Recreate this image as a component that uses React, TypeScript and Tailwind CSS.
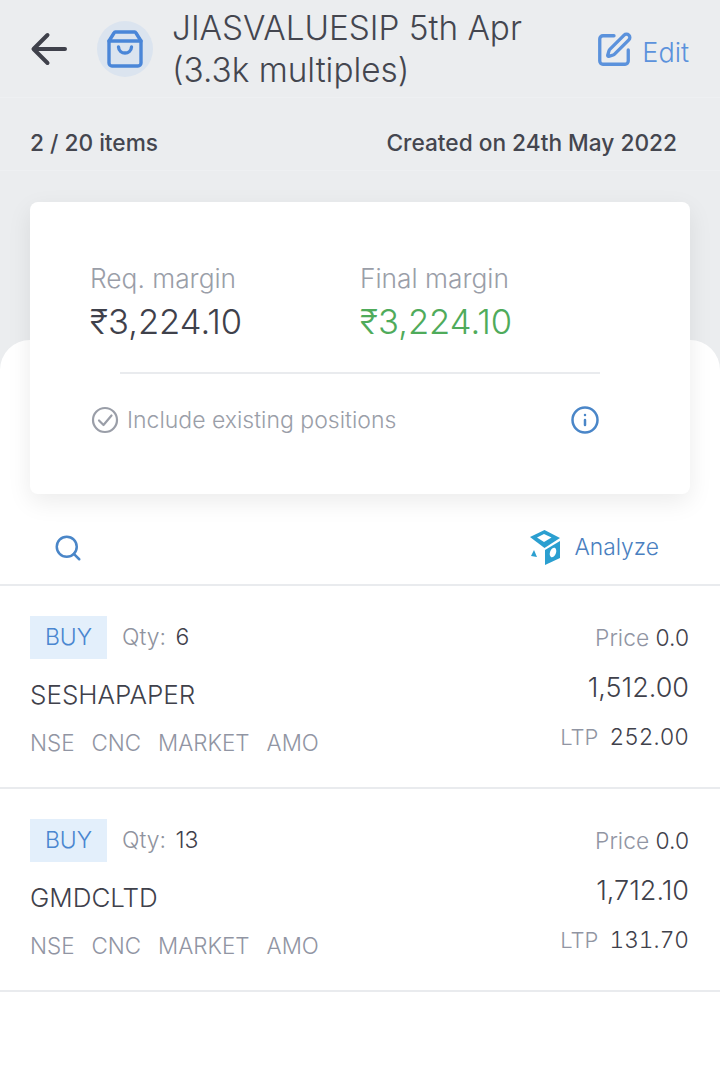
import { Search, Info, SquarePen } from 'lucide-react';

interface Order {
  symbol: string;
  qty: number;
  total: string;
  ltp: string;
}

const orders: Order[] = [
  { symbol: 'SESHAPAPER', qty: 6, total: '1,512.00', ltp: '252.00' },
  { symbol: 'GMDCLTD', qty: 13, total: '1,712.10', ltp: '131.70' },
];

function OrderRow({ order }: { order: Order }) {
  return (
    <div className="flex h-[203px] justify-between border-b-2 border-[#e9ebee] px-[30px] pt-[30px] pr-[31px]">
      <div>
        <div className="flex items-center gap-[15px]">
          <span className="flex h-[43px] w-[77px] items-center justify-center bg-[#e3effb] text-[23px] font-light text-[#4a86d0]">BUY</span>
          <span className="text-[23px] font-light text-[#8f939e]">
            Qty: <span className="ml-[3px] text-[#3f414b]">{order.qty}</span>
          </span>
        </div>
        <div className="mt-[18px] text-[26px] leading-[36px] font-light text-[#3f414b]">{order.symbol}</div>
        <div className="mt-[15px] flex gap-[17px] text-[22.400px] leading-[30px] font-light text-[#9195a3]">
          <span>NSE</span>
          <span>CNC</span>
          <span>MARKET</span>
          <span>AMO</span>
        </div>
      </div>
      <div className="flex flex-col items-end">
        <div className="mt-[7px] text-[22.800px] leading-[30px] font-light text-[#9195a3]">
          Price <span className="text-[#3f414b]">0.0</span>
        </div>
        <div className="mt-[17px] text-[27px] leading-[36px] font-light text-[#3f414b]">{order.total}</div>
        <div className="mt-[16px] text-[22px] leading-[30px] font-light text-[#9195a3]">
          LTP <span className="ml-[5px] text-[22.700px] text-[#3f414b] tabular-nums">{order.ltp}</span>
        </div>
      </div>
    </div>
  );
}

export default function App() {
  return (
    <div className="h-[1077px] w-[720px] overflow-hidden bg-[#ebedef] font-['Inter',sans-serif]">
      {/* header */}
      <div className="flex h-[98px] items-center border-b border-[#eef0f2] pl-[28px] pr-[31px]">
        <svg viewBox="0 0 40 40" className="h-[40px] w-[40px] text-[#3f414b]" fill="none" stroke="currentColor" strokeWidth={4} strokeLinecap="round" strokeLinejoin="round">
          <path d="M6 20H37M19.500 6 5.500 20 19.500 34" />
        </svg>
        <div className="ml-[29px] flex h-[56px] w-[56px] items-center justify-center rounded-full bg-[#dbe4ef]">
          <svg viewBox="0 0 36 38" className="h-[38px] w-[36px] text-[#4a86d8]" fill="none" stroke="currentColor" strokeWidth={3.4} strokeLinecap="round" strokeLinejoin="round">
            <path d="M2 11 7 3A2 2 0 0 1 8.500 2H27.500A2 2 0 0 1 29 3L34 11V33A3 3 0 0 1 31 36H5A3 3 0 0 1 2 33Z" />
            <path d="M2 11H34" />
            <path d="M11.500 17C12 25 24 25 24.500 17" />
          </svg>
        </div>
        <div className="ml-[19px] flex-1 text-[33.300px] leading-[42px] font-light whitespace-nowrap text-[#44464f]">
          JIASVALUESIP 5th Apr
          <br />
          (3.3k multiples)
        </div>
        <div className="mt-[3px] flex items-center gap-[9px] text-[#5b92dc]">
          <SquarePen className="h-[38px] w-[38px]" strokeWidth={2.1} />
          <span className="mt-[7px] text-[27px] font-light">Edit</span>
        </div>
      </div>

      {/* summary line */}
      <div className="flex h-[73px] items-start justify-between border-b border-[#eef0f2] pt-[31px] pr-[43px] pl-[30px] text-[22.700px] leading-[28px] font-medium text-[#44464f]">
        <span>2 / 20 items</span>
        <span>Created on 24th May 2022</span>
      </div>

      {/* margin card, hangs over the sheet */}
      <div className="relative z-10 mx-[30px] mt-[31px] -mb-[154px] h-[292px] rounded-[8px] bg-white px-[60px] pt-[60px] shadow-[0_8px_24px_rgba(0,0,0,0.08)]">
        <div className="flex">
          <div className="w-[270px]">
            <div className="text-[26.300px] leading-[34px] font-light text-[#9a9ea8]">Req. margin</div>
            <div className="mt-[3px] text-[34.600px] leading-[44px] font-light text-[#3f414b]">₹3,224.10</div>
          </div>
          <div>
            <div className="text-[26.300px] leading-[34px] font-light text-[#9a9ea8]">Final margin</div>
            <div className="mt-[3px] text-[34.600px] leading-[44px] font-light text-[#4fab5b]">₹3,224.10</div>
          </div>
        </div>
        <div className="mx-[30px] mt-[29px] h-[2px] bg-[#e9ebee]" />
        <div className="mt-[29px] flex items-center justify-between pr-[30px]">
          <div className="flex items-center gap-[9px] text-[23px] font-light text-[#9a9ea8]">
            <svg viewBox="0 0 28 28" className="ml-[1px] h-[28px] w-[28px]" fill="none" stroke="currentColor" strokeWidth={2.2} strokeLinecap="round" strokeLinejoin="round">
              <circle cx="14" cy="14" r="12" />
              <path d="M8 14.500 12.500 19 20.500 9.500" />
            </svg>
            <span className="-ml-[1px]">Include existing positions</span>
          </div>
          <Info className="h-[30px] w-[30px] text-[#4a86c8]" strokeWidth={2} />
        </div>
      </div>

      {/* white sheet */}
      <div className="h-[737px] rounded-t-[30px] bg-white">
        <div className="flex h-[246px] items-end border-b-2 border-[#e9ebee] pr-[61px] pb-[19px] pl-[53px]">
          <div className="flex w-full items-center justify-between">
            <Search className="h-[30px] w-[30px] text-[#4a86c8]" strokeWidth={2} />
            <div className="flex items-center gap-[13px]">
              <svg viewBox="0 0 31 35" className="h-[35px] w-[31px]">
                <path fill="#2b9fd0" d="M14.500 0 30 8 14.500 18 0 7Z" />
                <path fill="#fff" d="M14 4 21.500 7.500 14 12 7 7.500Z" />
                <path fill="#2b9fd0" d="M15 20 30 11V28L15 35Z" />
                <ellipse fill="#fff" cx="23" cy="22.500" rx="3" ry="5" transform="rotate(20 23 22.500)" />
                <path fill="#2b9fd0" d="M4 20 7 27 1 26Z" />
              </svg>
              <span className="text-[22.800px] font-light text-[#4a7fc0]">Analyze</span>
            </div>
          </div>
        </div>
        {orders.map((order) => (
          <OrderRow key={order.symbol} order={order} />
        ))}
      </div>
    </div>
  );
}
